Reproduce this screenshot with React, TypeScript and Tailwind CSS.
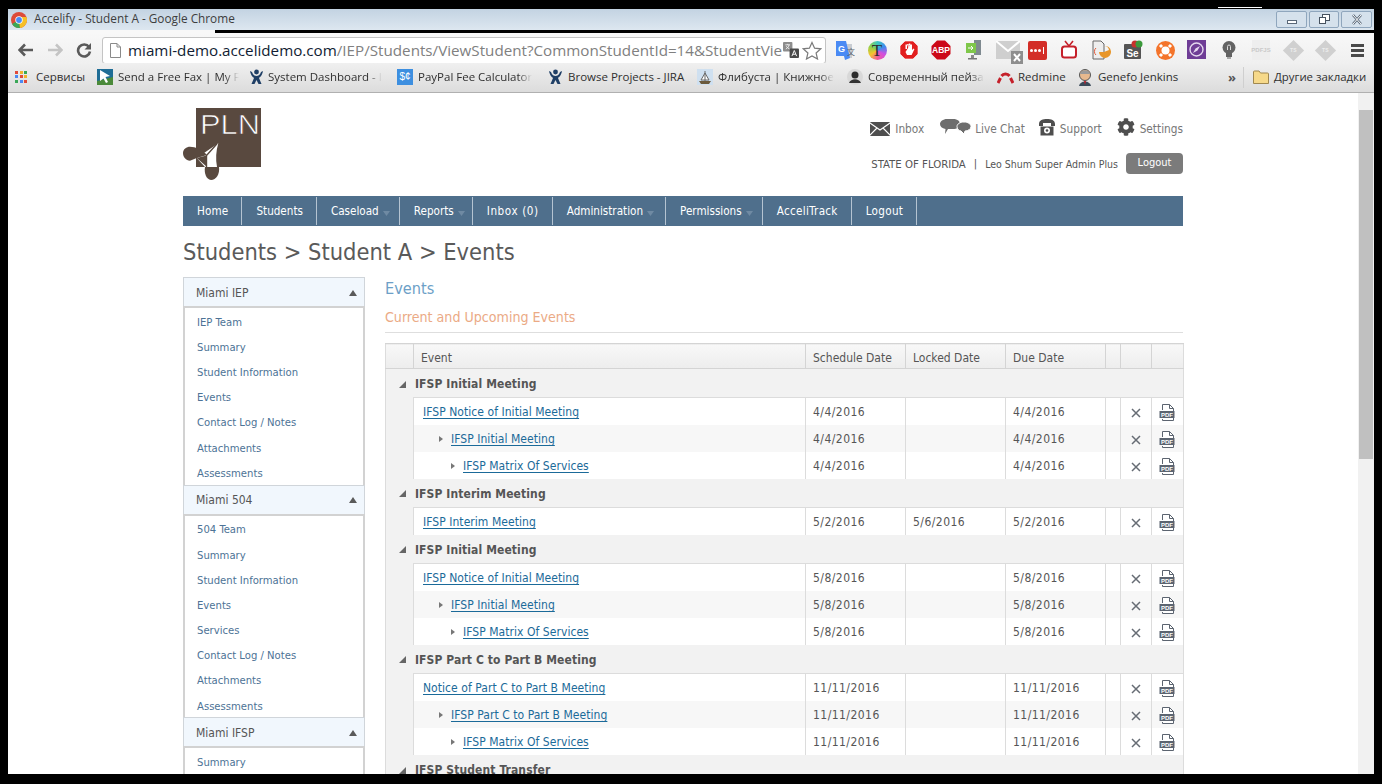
import React from "react";
import { FaCog } from "react-icons/fa";

const uiFont = "font-['Open_Sans','Noto_Sans',sans-serif]";

function ChromeLogo() {
  return (
    <svg width="16" height="16" viewBox="0 0 16 16" className="shrink-0">
      <circle cx="8" cy="8" r="8" fill="#dd4b39" />
      <path d="M8 8 L1.1 12 A8 8 0 0 0 9 15.9 Z" fill="#3aa757" />
      <path d="M8 5 H15.4 A8 8 0 0 1 9 15.9 L8 8 Z" fill="#f6c026" />
      <circle cx="8" cy="8" r="3.7" fill="#fff" />
      <circle cx="8" cy="8" r="2.9" fill="#4a8af4" />
    </svg>
  );
}

function WinButton({ kind, w }: { kind: "min" | "max" | "close"; w: string }) {
  return (
    <div className={`${w} h-[17px] rounded-[2px] border border-[#8fa6bd] bg-[#d5e1ec] flex items-center justify-center`}>
      <svg width="14" height="11" viewBox="0 0 14 11">
        {kind === "min" && <rect x="2.5" y="6.5" width="9" height="3" fill="#fff" stroke="#5a6878" />}
        {kind === "max" && (
          <g fill="#fff" stroke="#46525f">
            <rect x="5.5" y="0.5" width="7" height="6" />
            <rect x="2.5" y="3.5" width="6" height="6" />
          </g>
        )}
        {kind === "close" && <path d="M3 1 L11 10 M11 1 L3 10" stroke="#5a6878" strokeWidth="2.6" />}
        {kind === "close" && <path d="M3 1 L11 10 M11 1 L3 10" stroke="#fff" strokeWidth="1" />}
      </svg>
    </div>
  );
}

function TitleBar() {
  return (
    <div className="h-[21px] shrink-0 bg-gradient-to-b from-[#c3d3e2] to-[#dde7f0] flex items-center pl-[3px] pr-[2px]">
      <ChromeLogo />
      <span className={`ml-[7px] -mt-[2px] text-[11.8px] text-[#3d3d3d] ${uiFont}`}>Accelify - Student A - Google Chrome</span>
      <div className="ml-auto flex gap-[2px] -mt-px">
        <WinButton kind="min" w="w-[31px]" />
        <WinButton kind="max" w="w-[30px]" />
        <WinButton kind="close" w="w-[31px]" />
      </div>
    </div>
  );
}

function Nav() {
  return (
    <div className="flex items-center">
      <svg width="16" height="14" viewBox="0 0 16 14" className="ml-[10px]">
        <path d="M1 7 H15 M7 1.5 L1.5 7 L7 12.5" fill="none" stroke="#5a5a5a" strokeWidth="2.6" />
      </svg>
      <svg width="16" height="14" viewBox="0 0 16 14" className="ml-[13px]">
        <path d="M15 7 H1 M9 1.5 L14.5 7 L9 12.5" fill="none" stroke="#c4c4c4" strokeWidth="2.6" />
      </svg>
      <svg width="16" height="16" viewBox="0 0 16 16" className="ml-[13px]">
        <path d="M13 5 A6 6 0 1 0 14 9.5" fill="none" stroke="#5a5a5a" strokeWidth="2.6" />
        <path d="M15 1 V7.5 H8.5 Z" fill="#5a5a5a" />
      </svg>
    </div>
  );
}

const I = ({ children }: { children: React.ReactNode }) => (
  <div className="w-[32px] h-[20px] flex items-center justify-center shrink-0">{children}</div>
);

function Extensions() {
  return (
    <div className="flex items-center ml-[3px]">
      <I>
        <svg width="20" height="20" viewBox="0 0 20 20">
          <path d="M6 4 H17 V18 H10 Z" fill="#c8ccd2" />
          <path d="M1 1 H11 L15 18 L10 20 L9 16 H1 Z" fill="#4a8af4" />
          <text x="3" y="12" fontSize="9" fontWeight="700" fill="#fff" fontFamily="Liberation Sans">G</text>
          <text x="12" y="15" fontSize="8" fill="#5a6470" fontFamily="Noto Sans CJK SC">文</text>
        </svg>
      </I>
      <I>
        <div className="w-[19px] h-[19px] rounded-full bg-[conic-gradient(#3cc7c0,#3d8bee,#d24fe0,#f05a9a,#f5c52c,#8fd04a,#3cc7c0)] flex items-center justify-center">
          <span className="font-['Liberation_Serif',serif] text-[17px] leading-none text-[#2d2d2d]">T</span>
        </div>
      </I>
      <I>
        <svg width="20" height="20" viewBox="0 0 20 20">
          <path d="M6 1 H14 L19 6 V14 L14 19 H6 L1 14 V6 Z" fill="#e21f1f" stroke="#fff" strokeWidth="0.6" />
          <path d="M6.5 9 V4.6 H8 V9 M8 4 H9.7 V9 M9.7 3.5 H11.3 V9 M11.3 4.4 H13 V10 L14.6 8.5 L15.4 9.3 L12.6 15 H8 L6.5 12 Z" fill="#fff" />
        </svg>
      </I>
      <I>
        <svg width="20" height="20" viewBox="0 0 20 20">
          <path d="M6 0.5 H14 L19.5 6 V14 L14 19.5 H6 L0.5 14 V6 Z" fill="#cc0818" />
          <text x="10" y="13" textAnchor="middle" fontSize="8.5" fontWeight="700" fill="#fff" fontFamily="Liberation Sans">ABP</text>
        </svg>
      </I>
      <I>
        <svg width="20" height="20" viewBox="0 0 20 20">
          <rect x="11" y="0" width="7" height="15" fill="#7f8a90" />
          <rect x="3" y="3" width="10" height="10" fill="#7fc74a" />
          <path d="M5 8 H10 M8 6 L10 8 L8 10" stroke="#fff" fill="none" />
          <rect x="8" y="15" width="3" height="3" fill="#888" />
          <rect x="5" y="18" width="9" height="1.5" fill="#777" />
        </svg>
      </I>
      <div className="w-[36px] h-[24px] relative shrink-0 mt-[3px] ml-[2px]">
        <svg width="24" height="19" viewBox="0 0 24 19" className="absolute left-[5px] top-[1px]">
          <rect width="24" height="18" fill="#cfcfcf" />
          <path d="M0 0 L12 10 L24 0" stroke="#fff" strokeWidth="2" fill="none" />
        </svg>
        <svg width="12" height="13" viewBox="0 0 12 13" className="absolute left-[20px] top-[11px]">
          <rect width="12" height="13" fill="#8e8e8e" />
          <path d="M3 3 L9 10 M9 3 L3 10" stroke="#fff" strokeWidth="2" />
        </svg>
      </div>
      <div className="w-[20px] mr-[6px] flex justify-center shrink-0">
        <div className="w-[19px] h-[19px] bg-[#d32d27] rounded-[2px] flex items-center justify-center gap-px">
          <span className="w-[3px] h-[3px] bg-white rounded-full" />
          <span className="w-[3px] h-[3px] bg-white rounded-full" />
          <span className="w-[3px] h-[3px] bg-white rounded-full" />
          <span className="w-px h-[7px] bg-white ml-px" />
        </div>
      </div>
      <div className="w-[32px] flex justify-center shrink-0">
        <svg width="18" height="20" viewBox="0 0 18 20">
          <path d="M5 1 L9 6 L13 1" stroke="#c5202a" strokeWidth="1.6" fill="none" />
          <rect x="2" y="6.5" width="14" height="11" rx="2.5" fill="#fff" stroke="#c5202a" strokeWidth="2" />
        </svg>
      </div>
      <I>
        <svg width="20" height="20" viewBox="0 0 20 20">
          <path d="M2 1 H10 L13 4 V19 H2 Z" fill="#eee" stroke="#666" />
          <path d="M5 8 A3 4 0 0 0 5 15" stroke="#e35a3a" fill="none" />
          <path d="M13 6 A6 6 0 1 1 8 12 L13 12 L18 10 A5 5 0 0 0 13 6 Z" fill="#e8962a" />
        </svg>
      </I>
      <I>
        <svg width="20" height="20" viewBox="0 0 20 20">
          <rect x="1" y="4" width="17" height="15" rx="1" fill="#555" />
          <circle cx="12" cy="4" r="3.5" fill="#c9302c" />
          <circle cx="16" cy="4" r="3.5" fill="#3c9a3c" />
          <text x="9.5" y="16.5" textAnchor="middle" fontSize="10" fontWeight="700" fill="#fff" fontFamily="Liberation Sans">Se</text>
        </svg>
      </I>
      <I>
        <svg width="19" height="19" viewBox="0 0 19 19">
          <circle cx="9.5" cy="9.5" r="9.5" fill="#f4742b" />
          <circle cx="9.5" cy="9.5" r="4" fill="#fff" />
          <path d="M4 4 L6 6 M15 4 L13 6 M4 15 L6 13 M15 15 L13 13" stroke="#fff" strokeWidth="3" />
        </svg>
      </I>
      <I>
        <svg width="20" height="20" viewBox="0 0 20 20">
          <rect width="19" height="19" fill="#6f3d96" />
          <circle cx="9.5" cy="9.5" r="6.5" fill="none" stroke="#e5d8ef" strokeWidth="1.4" />
          <path d="M13 6 L10.5 10.5 L6 13 L8.5 8.5 Z" fill="#e5d8ef" />
        </svg>
      </I>
      <I>
        <svg width="14" height="18" viewBox="0 0 14 18">
          <circle cx="7" cy="6.5" r="6.5" fill="#636363" />
          <rect x="4" y="12" width="6" height="4" fill="#636363" />
          <rect x="5" y="16" width="4" height="2" fill="#a8a8a8" />
          <path d="M5.5 9 V5.5 A1.5 1.5 0 0 1 8.5 5.5 V9" stroke="#ddd" fill="none" />
        </svg>
      </I>
      <I>
        <div className="w-[18px] h-[20px] bg-[#eeeeee] flex items-center justify-center">
          <span className="text-[6px] leading-none font-bold text-[#c9c9c9] font-['Liberation_Sans',sans-serif]">PDFJS</span>
        </div>
      </I>
      <I>
        <div className="w-[15px] h-[15px] bg-[#d0d0d0] rotate-45 flex items-center justify-center">
          <span className="-rotate-45 text-[5px] font-bold leading-none text-[#eee] font-['Liberation_Sans',sans-serif]">TS</span>
        </div>
      </I>
      <I>
        <div className="w-[15px] h-[15px] bg-[#d0d0d0] rotate-45 flex items-center justify-center">
          <span className="-rotate-45 text-[5px] font-bold leading-none text-[#eee] font-['Liberation_Sans',sans-serif]">TS</span>
        </div>
      </I>
      <I>
        <div className="flex flex-col gap-[2px]">
          <span className="w-[13px] h-[3px] bg-[#4a4a4a]" />
          <span className="w-[13px] h-[3px] bg-[#4a4a4a]" />
          <span className="w-[13px] h-[3px] bg-[#4a4a4a]" />
        </div>
      </I>
    </div>
  );
}

function Toolbar() {
  return (
    <div className="h-[30px] shrink-0 flex items-center pt-[4px] bg-gradient-to-b from-[#f8f8f8] to-[#f0f0f0]">
      <div className="w-[94px] shrink-0">
        <Nav />
      </div>
      <div className="w-[724px] h-[27px] shrink-0 bg-white border border-[#c4c4c4] rounded-[3px] flex items-center pl-[7px] pr-[2px]">
        <svg width="11" height="15" viewBox="0 0 11 15" className="shrink-0">
          <path d="M0.5 0.5 H7 L10.5 4 V14.5 H0.5 Z M7 0.5 V4 H10.5" fill="#fff" stroke="#8a8a8a" />
        </svg>
        <div className={`ml-[7px] pt-px w-[655px] shrink-0 whitespace-nowrap text-[15.2px] ${uiFont}`}>
          <span className="text-[#111d33]">miami-demo.accelidemo.com</span>
          <span className="text-[#808080]">/IEP/Students/ViewStudent?CommonStudentId=14&amp;StudentVie</span>
        </div>
        <svg width="16" height="16" viewBox="0 0 17 17" className="shrink-0">
          <rect x="0" y="0" width="10" height="10" rx="1" fill="#8d8d8d" />
          <rect x="7" y="7" width="10" height="10" rx="1" fill="#4a4a4a" />
          <path d="M12 9 L9.5 15 M12 9 L14.5 15 M10.5 13 H13.5" stroke="#fff" fill="none" />
          <path d="M2.5 3 H7.5 M5 2 V3 M3 7.5 C5 6.5 6 5 6.5 3 M3.5 4.5 C4.5 6 5.5 7 7 7.5" stroke="#fff" fill="none" strokeWidth="0.8" />
        </svg>
        <svg width="20" height="19" viewBox="0 0 20 19" className="shrink-0 ml-[3px]">
          <path d="M10 1.5 L12.6 7.2 L18.8 7.8 L14.1 12 L15.5 18 L10 14.9 L4.5 18 L5.9 12 L1.2 7.8 L7.4 7.2 Z" fill="#fff" stroke="#7a7a7a" strokeWidth="1.2" />
        </svg>
      </div>
      <Extensions />
    </div>
  );
}

function AtlassianIcon() {
  return (
    <svg width="15" height="16" viewBox="0 0 15 16" className="shrink-0">
      <circle cx="7.5" cy="3" r="2.4" fill="#1f3f66" />
      <path d="M1 2 C2 7 4 8 5 9 L2.5 15 H5.5 L7.5 11 L9.5 15 H12.5 L10 9 C11 8 13 7 14 2 L12 3 C11 6 9 7 7.5 7 C6 7 4 6 3 3 Z" fill="#1f3f66" />
    </svg>
  );
}

function Bm({ w, iw, icon, label, fade }: { w: string; iw: string; icon: React.ReactNode; label: string; fade?: boolean }) {
  return (
    <div className={`${w} flex items-center shrink-0`}>
      <span className={`${iw} shrink-0 flex`}>{icon}</span>
      <span
        className={`whitespace-nowrap text-[11.5px] text-[#303030] ${uiFont} ${
          fade ? "[mask-image:linear-gradient(to_right,black_88%,transparent)]" : ""
        }`}
      >
        {label}
      </span>
    </div>
  );
}

function Bookmarks() {
  const grid = ["#e04a3a", "#f0b32c", "#3aa757", "#4a8af4", "#e04a3a", "#f0b32c", "#3aa757", "#4a8af4", "#e04a3a"];
  return (
    <div className="h-[30px] shrink-0 flex items-center pl-[7px] pb-px bg-gradient-to-b from-[#f0f0f0] to-[#dcdcdc] border-b border-[#b0b0b0]">
      <Bm
        w="w-[82px]"
        iw="w-[21px]"
        label="Сервисы"
        icon={
          <div className="grid grid-cols-3 gap-px w-[13px] h-[13px]">
            {grid.map((c, i) => (
              <span key={i} className="w-[3px] h-[3px]" style={{ background: c }} />
            ))}
          </div>
        }
      />
      <Bm
        w="w-[152px]"
        iw="w-[21px]"
        fade
        label="Send a Free Fax | My F"
        icon={
          <svg width="16" height="16" viewBox="0 0 16 16">
            <rect width="16" height="16" fill="#1f6d96" />
            <path d="M0 12 L16 8 V16 H0 Z" fill="#4b8a3a" />
            <path d="M3 1 L13 7 L8.5 8 L11 13 L9 14 L6.5 9.5 L3 12 Z" fill="#fff" />
          </svg>
        }
      />
      <Bm w="w-[148px]" iw="w-[19px]" fade label="System Dashboard - I" icon={<AtlassianIcon />} />
      <Bm
        w="w-[151px]"
        iw="w-[21px]"
        fade
        label="PayPal Fee Calculator"
        icon={
          <div className="w-[16px] h-[16px] bg-[#3d8fe0] flex items-center justify-center text-[10px] text-white leading-none font-['Liberation_Sans',sans-serif]">
            $¢
          </div>
        }
      />
      <Bm w="w-[149px]" iw="w-[20px]" label="Browse Projects - JIRA" icon={<AtlassianIcon />} />
      <Bm
        w="w-[150px]"
        iw="w-[21px]"
        fade
        label="Флибуста | Книжное"
        icon={
          <svg width="16" height="16" viewBox="0 0 16 16">
            <rect width="16" height="16" fill="#cfe0f0" />
            <path d="M2 12 H14 L12 15 H4 Z" fill="#6b5a3c" />
            <path d="M8 2 V12 M4 11 L8 4 L12 11 Z" stroke="#666" fill="#fff" />
          </svg>
        }
      />
      <Bm
        w="w-[150px]"
        iw="w-[21px]"
        fade
        label="Современный пейза"
        icon={
          <svg width="16" height="16" viewBox="0 0 16 16">
            <circle cx="8" cy="8" r="8" fill="#d8d8d8" />
            <circle cx="8" cy="6" r="3.5" fill="#2b2b2b" />
            <path d="M2 14 C4 9 12 9 14 14 Z" fill="#333" />
          </svg>
        }
      />
      <Bm
        w="w-[80px]"
        iw="w-[21px]"
        label="Redmine"
        icon={
          <svg width="17" height="14" viewBox="0 0 17 14">
            <path d="M1 13 L3.5 8 M13.5 8 L16 13 M4.5 6 A5 5 0 0 1 12.5 6" fill="none" stroke="#c5202a" strokeWidth="3" />
          </svg>
        }
      />
      <Bm
        w="w-[151px]"
        iw="w-[21px]"
        label="Genefo Jenkins"
        icon={
          <svg width="16" height="17" viewBox="0 0 16 17">
            <circle cx="8" cy="6" r="5.5" fill="#e7b98e" stroke="#555" />
            <path d="M3 5 C4 0 12 0 13 5 Z" fill="#9a9a9a" />
            <path d="M2 17 C3 11 13 11 14 17 Z" fill="#3a4a5a" />
            <path d="M7 12 L9 12 L8 16 Z" fill="#c5202a" />
          </svg>
        }
      />
      <span className={`w-[10px] text-[#555] text-[13px] font-bold leading-none ${uiFont}`}>»</span>
      <span className="w-px h-[21px] bg-[#cfcfcf] ml-[5px] mr-[9px]" />
      <svg width="16" height="14" viewBox="0 0 16 14" className="shrink-0">
        <path d="M0.5 2 A1 1 0 0 1 1.5 1 H6 L7.5 3 H14.5 A1 1 0 0 1 15.5 4 V13.5 H0.5 Z" fill="#f6d98a" stroke="#a08850" />
      </svg>
      <span className={`ml-[5px] text-[11.4px] whitespace-nowrap text-[#303030] ${uiFont}`}>Другие закладки</span>
    </div>
  );
}

function Logo() {
  return (
    <svg width="80" height="75" viewBox="0 0 80 75">
      <rect x="13" y="2" width="65" height="59" fill="#59493f" />
      <text x="17" y="27.5" fontSize="28" fill="#fff" stroke="#59493f" strokeWidth="0.7" fontFamily="Liberation Sans" textLength="60" lengthAdjust="spacingAndGlyphs">
        PLN
      </text>
      <path d="M35.3 37.3 L13.7 52 L22 61 H34 C32.5 53 33 45 35.3 37.3 Z" fill="#fff" />
      <path d="M0 47 C0 43 3.5 40.7 7 40.7 C12 40.7 20 44 24 49 L13.7 52 L7 54.7 C3 54.7 0 51 0 47 Z" fill="#59493f" />
      <path d="M34 37.8 L23.5 49.5 L23.5 61" fill="none" stroke="#59493f" strokeWidth="1.4" />
      <path d="M13.7 52 L23.5 49.5 L23.5 60.5 Z" fill="#59493f" />
      <path d="M22 61 H36 C37 68 33 74 28 74 C23 73.5 21 67 22 61 Z" fill="#59493f" />
    </svg>
  );
}

function MailIcon() {
  return (
    <svg width="20" height="14" viewBox="0 0 20 14">
      <rect width="20" height="14" rx="1" fill="#4e4e4e" />
      <path d="M0 1 L10 8 L20 1 M0 13 L7 6 M20 13 L13 6" stroke="#fff" strokeWidth="1.1" fill="none" />
    </svg>
  );
}
function ChatIcon() {
  return (
    <svg width="31" height="17" viewBox="0 0 31 17">
      <path d="M7 0 H13 C18 0 20 2.5 20 5 C20 8 17 10 13 10 L8 10 L5 15 L5.5 10 C2 9.5 0 7.5 0 5 C0 2.5 3 0 7 0 Z" fill="#6d6d6d" />
      <path d="M24 3 C28 3 31 5 31 7.5 C31 10 28 12 25 12 L24 15 L21 12 C18.5 11.5 17 10 17 7.5 C17 5 20 3 24 3 Z" fill="#6d6d6d" stroke="#fff" />
    </svg>
  );
}
function PhoneIcon() {
  return (
    <svg width="16" height="17" viewBox="0 0 16 17">
      <path d="M0 5 C0 1 4 0 8 0 C12 0 16 1 16 5 V7 H12 V4 H4 V7 H0 Z" fill="#4e4e4e" />
      <path d="M1.5 7.5 H14.5 V16.5 H1.5 Z" fill="#4e4e4e" />
      <circle cx="8" cy="11.5" r="3" fill="#fff" />
      <circle cx="8" cy="11.5" r="1.3" fill="#4e4e4e" />
    </svg>
  );
}

function TopLink({ icon, label, gap }: { icon: React.ReactNode; label: string; gap: string }) {
  return (
    <div className={`flex items-end ${gap}`}>
      {icon}
      <span className="text-[11.75px] leading-[14px] text-[#777]">{label}</span>
    </div>
  );
}

function PageHeader() {
  return (
    <div className="h-[103px] flex justify-between">
      <div className="pt-[13px]">
        <Logo />
      </div>
      <div className="flex flex-col items-end pt-[25px]">
        <div className="flex items-end">
          <TopLink gap="gap-[5px]" icon={<MailIcon />} label="Inbox" />
          <div className="ml-[16px]">
            <TopLink gap="gap-[4px]" icon={<ChatIcon />} label="Live Chat" />
          </div>
          <div className="ml-[14px]">
            <TopLink gap="gap-[5px]" icon={<PhoneIcon />} label="Support" />
          </div>
          <div className="ml-[15px]">
            <TopLink gap="gap-[5px]" icon={<FaCog className="text-[#4e4e4e] text-[18px]" />} label="Settings" />
          </div>
        </div>
        <div className="flex items-center mt-[17px]">
          <div className="flex items-center mt-[2px]">
            <span className="text-[11.3px] pt-px text-[#555]">STATE OF FLORIDA</span>
            <span className="text-[11px] text-[#555] mx-[8px]">|</span>
            <span className="text-[10.5px] text-[#555]">Leo Shum Super Admin Plus</span>
          </div>
          <button className="ml-[8px] w-[57px] h-[21px] rounded-[4px] bg-[#7b7b7b] text-white text-[11px] flex items-center justify-center">
            Logout
          </button>
        </div>
      </div>
    </div>
  );
}

function MainNav() {
  const items: { t: string; caret?: boolean; pr: string; tr: string }[] = [
    { t: "Home", pr: "pr-[13px]", tr: "tracking-[0.15px]" },
    { t: "Students", pr: "pr-[13px]", tr: "" },
    { t: "Caseload", caret: true, pr: "pr-[11px]", tr: "" },
    { t: "Reports", caret: true, pr: "pr-[9px]", tr: "" },
    { t: "Inbox (0)", pr: "pr-[13px]", tr: "tracking-[0.6px]" },
    { t: "Administration", caret: true, pr: "pr-[13px]", tr: "" },
    { t: "Permissions", caret: true, pr: "pr-[11px]", tr: "" },
    { t: "AcceliTrack", pr: "pr-[13px]", tr: "tracking-[0.3px]" },
    { t: "Logout", pr: "pr-[13px]", tr: "tracking-[0.3px]" },
  ];
  return (
    <div className="h-[30px] bg-[#4f6f8c] flex py-px">
      {items.map(({ t, caret, pr, tr }) => (
        <div key={t} className={`flex items-center pt-[2px] pl-[14px] ${pr} ${tr} border-r border-[#b5c4d2] text-[11.6px] text-white whitespace-nowrap`}>
          {t}
          {caret && (
            <svg width="7" height="5" viewBox="0 0 7 5" className="ml-[4px] -mr-[2px] mt-[2px]">
              <path d="M0 0 H7 L3.5 5 Z" fill="#6f8aa3" />
            </svg>
          )}
        </div>
      ))}
    </div>
  );
}

function SideGroup({ title, items }: { title: string; items: string[] }) {
  return (
    <div>
      <div className="h-[29px] pt-px bg-[#f1f7fd] border border-[#d0d5da] border-b-0 pl-[12px] pr-[7px] flex items-center justify-between">
        <span className="text-[12px] text-[#555]">{title}</span>
        <svg width="8" height="6" viewBox="0 0 8 6">
          <path d="M4 0 L8 6 H0 Z" fill="#5a5a5a" />
        </svg>
      </div>
      <div className="border-x-2 border-t-2 border-[#d2d2d2] bg-white pt-[2.5px] -mb-[2.2px] pl-[12px]">
        {items.map((t) => (
          <div key={t + title} className="h-[25.2px] flex items-center text-[11.2px] text-[#4d7396]">
            {t}
          </div>
        ))}
      </div>
    </div>
  );
}

function Sidebar() {
  return (
    <div className="w-[182px] shrink-0">
      <SideGroup title="Miami IEP" items={["IEP Team", "Summary", "Student Information", "Events", "Contact Log / Notes", "Attachments", "Assessments"]} />
      <SideGroup title="Miami 504" items={["504 Team", "Summary", "Student Information", "Events", "Services", "Contact Log / Notes", "Attachments", "Assessments"]} />
      <SideGroup title="Miami IFSP" items={["Summary", "Student Information"]} />
    </div>
  );
}

function PdfIcon() {
  return (
    <svg width="16" height="17" viewBox="0 0 16 17">
      <path d="M3.5 6 V0.5 H10.5 L14.5 4.5 V16.5 H3.5 V15" fill="#fff" stroke="#5c6470" />
      <path d="M10.5 0.5 V4.5 H14.5" fill="none" stroke="#5c6470" />
      <rect x="0.5" y="7" width="15" height="7" fill="#5c6470" />
      <text x="8" y="12.8" textAnchor="middle" fontSize="6" fontWeight="700" fill="#fff" fontFamily="Liberation Sans">PDF</text>
    </svg>
  );
}

function Row({ name, level, sched, locked, due, alt }: { name: string; level: number; sched: string; locked?: string; due: string; alt?: boolean }) {
  const bg = alt ? "bg-[#f7f7f7]" : "bg-white";
  const top = level === 0 ? "border-t" : "";
  const cell = `border-l ${top} border-[#dcdcdc] ${bg}`;
  const date = `${cell} p-0 pt-[2px] pl-[7px] text-[12px] tracking-[0.45px] text-[#555]`;
  return (
    <tr className="h-[27px]">
      <td className="bg-[#f2f2f2] p-0" />
      <td className={`${cell} p-0 pt-[2px] pl-[9px]`}>
        <div className="flex items-center">
          {level > 0 && (
            <svg width="4" height="6" viewBox="0 0 4 6" className={level === 1 ? "ml-[16px] mr-[8px]" : "ml-[28px] mr-[8px]"}>
              <path d="M0 0 L4 3 L0 6 Z" fill="#777" />
            </svg>
          )}
          <a className="text-[12px] tracking-[0.05px] text-[#1b6a99] underline underline-offset-2">{name}</a>
        </div>
      </td>
      <td className={date}>{sched}</td>
      <td className={date}>{locked}</td>
      <td className={date}>{due}</td>
      <td className={`${cell} p-0`} />
      <td className={`${cell} p-0`}>
        <svg width="10" height="10" viewBox="0 0 10 10" className="mx-auto mt-[3px]">
          <path d="M1 1 L9 9 M9 1 L1 9" stroke="#666c74" strokeWidth="1.5" />
        </svg>
      </td>
      <td className={`${cell} p-0`}>
        <div className="flex justify-center mt-[3px] mr-[2px]">
          <PdfIcon />
        </div>
      </td>
    </tr>
  );
}

function Group({ name }: { name: string }) {
  return (
    <tr className="h-[29px]">
      <td colSpan={8} className="bg-[#f2f2f2] p-0 pt-[2px] pl-[13px]">
        <div className="flex items-center">
          <svg width="7" height="7" viewBox="0 0 7 7" className="mr-[9px]">
            <path d="M7 0 V7 H0 Z" fill="#666" />
          </svg>
          <span className="text-[12px] font-bold tracking-[0.1px] text-[#555]">{name}</span>
        </div>
      </td>
    </tr>
  );
}

function EventsTable() {
  const th = "border-l border-[#d4d4d4] p-0 pt-[3px] pl-[7px] text-left font-normal text-[12px] text-[#555]";
  const set = (d: string, a: string, b: string, c: string) => (
    <>
      <Row name={a} level={0} sched={d} due={d} />
      <Row name={b} level={1} sched={d} due={d} alt />
      <Row name={c} level={2} sched={d} due={d} />
    </>
  );
  return (
    <table className="w-[798px] table-fixed border-collapse border-x border-[#dcdcdc]">
      <colgroup>
        <col className="w-[28px]" />
        <col className="w-[392px]" />
        <col className="w-[100px]" />
        <col className="w-[100px]" />
        <col className="w-[100px]" />
        <col className="w-[15px]" />
        <col className="w-[31px]" />
        <col className="w-[32px]" />
      </colgroup>
      <thead>
        <tr className="h-[25px] bg-gradient-to-b from-[#f8f8f8] to-[#ededed] border-y border-[#d4d4d4]">
          <th className="p-0" />
          <th className={th}>Event</th>
          <th className={th}>Schedule Date</th>
          <th className={th}>Locked Date</th>
          <th className={th}>Due Date</th>
          <th className={th} />
          <th className={th} />
          <th className={th} />
        </tr>
      </thead>
      <tbody>
        <Group name="IFSP Initial Meeting" />
        {set("4/4/2016", "IFSP Notice of Initial Meeting", "IFSP Initial Meeting", "IFSP Matrix Of Services")}
        <Group name="IFSP Interim Meeting" />
        <Row name="IFSP Interim Meeting" level={0} sched="5/2/2016" locked="5/6/2016" due="5/2/2016" />
        <Group name="IFSP Initial Meeting" />
        {set("5/8/2016", "IFSP Notice of Initial Meeting", "IFSP Initial Meeting", "IFSP Matrix Of Services")}
        <Group name="IFSP Part C to Part B Meeting" />
        {set("11/11/2016", "Notice of Part C to Part B Meeting", "IFSP Part C to Part B Meeting", "IFSP Matrix Of Services")}
        <Group name="IFSP Student Transfer" />
      </tbody>
    </table>
  );
}

function Page() {
  return (
    <div className="w-[1000px] mx-auto font-['DejaVu_Sans_Condensed','DejaVu_Sans',sans-serif]">
      <PageHeader />
      <MainNav />
      <h1 className="h-[51px] pt-[3px] flex items-center text-[23.45px] leading-none text-[#5a5a5a]">Students &gt; Student A &gt; Events</h1>
      <div className="flex gap-[20px]">
        <Sidebar />
        <div className="flex-1 min-w-0 pt-px">
          <h2 className="text-[16.2px] leading-[22px] text-[#6d9fc7]">Events</h2>
          <h3 className="mt-[7px] pb-[5px] text-[14.1px] leading-[20px] text-[#ebaa85] border-b border-[#dedede]">Current and Upcoming Events</h3>
          <div className="mt-[10px]">
            <EventsTable />
          </div>
        </div>
      </div>
    </div>
  );
}

export default function App() {
  return (
    <div className="relative h-[784px] w-[1382px] bg-black pt-[9px] pb-[10px] px-[8px] flex flex-col overflow-hidden">
      <div className="absolute left-[1218px] top-[7px] w-[44px] h-px bg-white" />
      <TitleBar />
      <div className="h-[3px] shrink-0 flex">
        <div className="w-[207px] bg-[#f8f8f8]" />
      </div>
      <Toolbar />
      <Bookmarks />
      <div className="flex-1 min-h-0 flex bg-white">
        <div className="flex-1 min-w-0 overflow-hidden">
          <Page />
        </div>
        <div className="w-[16px] shrink-0 bg-[#f1f1f1] pt-[17px] px-px">
          <div className="h-[349px] bg-[#c0c0c0]" />
        </div>
      </div>
    </div>
  );
}
